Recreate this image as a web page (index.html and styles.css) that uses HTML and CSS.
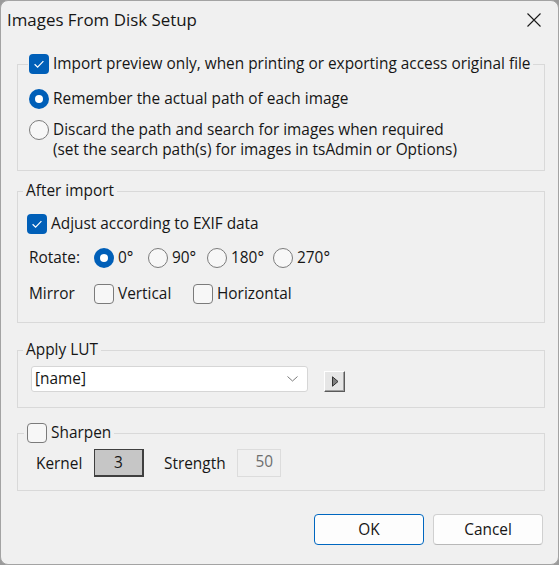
FILE: index.html
```html
<!DOCTYPE html>
<html lang="en">
<head>
<meta charset="utf-8">
<title>Images From Disk Setup</title>
<link rel="stylesheet" href="styles.css">
</head>
<body>
<div class="window">
  <div class="titlebar">
    <span class="title">Images From Disk Setup</span>
    <svg class="close" width="14" height="14" viewBox="0 0 14 14"><path d="M0.5 0.5 L13.5 13.5 M13.5 0.5 L0.5 13.5" stroke="#1a1a1a" stroke-width="1.1" fill="none"/></svg>
  </div>
  <div class="content">
    <fieldset class="group g1">
      <legend class="lg-check">
        <span class="check on"><svg width="20" height="20" viewBox="0 0 20 20"><path d="M5.6 10.3 L8.6 13.2 L14.4 7.2" stroke="#fff" stroke-width="1.2" fill="none"/></svg></span>
        <span>Import preview only, when printing or exporting access original file</span>
      </legend>
      <div class="body b1">
        <div class="row"><span class="radio on"></span><span>Remember the actual path of each image</span></div>
        <div class="row top"><span class="radio"></span><span>Discard the path and search for images when required<br>(set the search path(s) for images in tsAdmin or Options)</span></div>
      </div>
    </fieldset>

    <fieldset class="group g2">
      <legend class="lg-text">After import</legend>
      <div class="body b2">
        <div class="row"><span class="check on"><svg width="20" height="20" viewBox="0 0 20 20"><path d="M5.6 10.3 L8.6 13.2 L14.4 7.2" stroke="#fff" stroke-width="1.2" fill="none"/></svg></span><span>Adjust according to EXIF data</span></div>
        <div class="rotate">
          <span class="lbl">Rotate:</span>
          <span class="row"><span class="radio on"></span><span>0°</span></span>
          <span class="row"><span class="radio"></span><span>90°</span></span>
          <span class="row"><span class="radio"></span><span>180°</span></span>
          <span class="row"><span class="radio"></span><span>270°</span></span>
        </div>
        <div class="mirror">
          <span class="lbl">Mirror</span>
          <span class="row"><span class="check"></span><span>Vertical</span></span>
          <span class="row"><span class="check"></span><span>Horizontal</span></span>
        </div>
      </div>
    </fieldset>

    <fieldset class="group g3">
      <legend class="lg-text">Apply LUT</legend>
      <div class="body b3">
        <div class="combo">
          <span>[name]</span>
          <svg width="11" height="6" viewBox="0 0 11 6"><path d="M0.5 0.5 L5.5 5 L10.5 0.5" stroke="#7a7a7a" stroke-width="1" fill="none"/></svg>
        </div>
        <div class="tbtn"><svg width="8" height="11" viewBox="0 0 8 11"><path d="M1.5 0.8 L7 5.5 L1.5 10.2 Z" fill="#808080" stroke="#333" stroke-width="1"/></svg></div>
      </div>
    </fieldset>

    <fieldset class="group g4">
      <legend class="lg-check4">
        <span class="check"></span><span>Sharpen</span>
      </legend>
      <div class="body b4">
        <span class="lbl4">Kernel</span>
        <span class="kernel">3</span>
        <span class="lbl4 strength-lbl">Strength</span>
        <span class="strength">50</span>
      </div>
    </fieldset>

    <div class="buttons">
      <div class="btn primary">OK</div>
      <div class="btn">Cancel</div>
    </div>
  </div>
</div>
</body>
</html>
```
FILE: styles.css
```css
* { box-sizing: border-box; }
html, body { margin: 0; padding: 0; }
body {
  background: #9a9a9a;
  font-family: "Open Sans", "Noto Sans", sans-serif;
  font-size: 15.4px;
  color: #161616;
}
.window {
  width: 559px;
  height: 565px;
  background: #f0f0f0;
  border: 1px solid #a3a3a3;
  border-radius: 8px;
  overflow: hidden;
}
.titlebar {
  height: 37px;
  display: flex;
  align-items: center;
  justify-content: space-between;
  padding: 0 17px 0 6px;
}
.title { font-size: 16.9px; line-height: 20px; }
.close { margin-top: 1px; }
.content {
  padding: 16px 13px 0 16px;
}
.group {
  margin: 0;
  padding: 0;
  border: 1px solid #d9d9d9;
  min-width: 0;
}
.group legend {
  display: flex;
  align-items: center;
  height: 20px;
  line-height: 20px;
}
.lg-check { margin-left: 10px; padding: 0 2px 0 1px; gap: 4px; }
.lg-text { margin-left: 5px; padding: 0 3px; }
.lg-check4 { margin-left: 6px; padding: 0 3px; gap: 4px; }
.g2 { margin-top: 10px; }
.g3 { margin-top: 17px; }
.g4 { margin-top: 15px; }

.row {
  display: flex;
  align-items: center;
  gap: 4px;
  line-height: 20px;
}
.row.top { align-items: flex-start; }

.check, .radio {
  flex: none;
  width: 20px;
  height: 20px;
  display: inline-block;
}
.check {
  border: 1px solid #7b7b7b;
  border-radius: 4px;
  background: #f7f7f7;
}
.check.on {
  border: none;
  background: #005fb8;
}
.check svg { display: block; }
.radio {
  border: 1px solid #7b7b7b;
  border-radius: 50%;
  background: #f7f7f7;
}
.radio.on {
  border: none;
  background: #005fb8;
  position: relative;
}
.radio.on::after {
  content: "";
  position: absolute;
  left: 6px;
  top: 6px;
  width: 8px;
  height: 8px;
  border-radius: 50%;
  background: #fff;
}

.b1 { padding: 15px 0 10px 11px; display: flex; flex-direction: column; gap: 11px; }

.b2 { padding: 13px 0 18px 9px; display: flex; flex-direction: column; }
.rotate {
  margin-top: 14px;
  padding-left: 2px;
  display: grid;
  grid-template-columns: 65px 54px 59px 66px auto;
  line-height: 20px;
}
.mirror {
  margin-top: 16px;
  padding-left: 2px;
  display: grid;
  grid-template-columns: 65px 99px auto;
  line-height: 20px;
}

.b3 { padding: 6px 0 15px 13px; display: flex; align-items: flex-end; gap: 16px; }
.combo {
  width: 277px;
  height: 26px;
  background: #fff;
  border: 1px solid #d6d6d6;
  border-radius: 3px;
  display: flex;
  align-items: center;
  justify-content: space-between;
  padding: 0 9px 0 3px;
  line-height: 20px;
}
.tbtn {
  width: 21px;
  height: 21px;
  background: #e6e6e6;
  border: 1px solid;
  border-color: #ffffff #5a5a5a #5a5a5a #ffffff;
  box-shadow: inset -1px -1px 0 #a0a0a0;
  display: flex;
  align-items: center;
  justify-content: center;
  padding-left: 1px;
}
.tbtn svg { display: block; }

.b4 {
  padding: 6px 0 13px 18px;
  display: grid;
  grid-template-columns: 58px 50px 20px 73px 44px;
  align-items: center;
  line-height: 20px;
}
.lbl4 { padding-top: 2px; }
.strength-lbl { grid-column: 4; }
.kernel {
  height: 28px;
  background: #c6c6c6;
  border: 1px solid #3f3f3f;
  border-right-width: 2px;
  border-bottom-width: 2px;
  display: flex;
  align-items: center;
  justify-content: center;
  padding-top: 1px;
}
.strength {
  height: 28px;
  background: #f0f0f0;
  border: 1px solid #dcdcdc;
  color: #6e6e6e;
  display: flex;
  align-items: center;
  justify-content: flex-end;
  padding: 0 7px 2px 0;
}

.buttons {
  margin-top: 23px;
  display: flex;
  justify-content: flex-end;
  gap: 9px;
  padding-right: 2px;
}
.btn {
  width: 110px;
  height: 31px;
  background: #fdfdfd;
  border: 1px solid #d0d0d0;
  border-bottom-color: #b8b8b8;
  border-radius: 4px;
  display: flex;
  align-items: center;
  justify-content: center;
  line-height: 20px;
  padding-top: 1px;
}
.btn.primary {
  border: 1px solid #0067c0;
}
```
